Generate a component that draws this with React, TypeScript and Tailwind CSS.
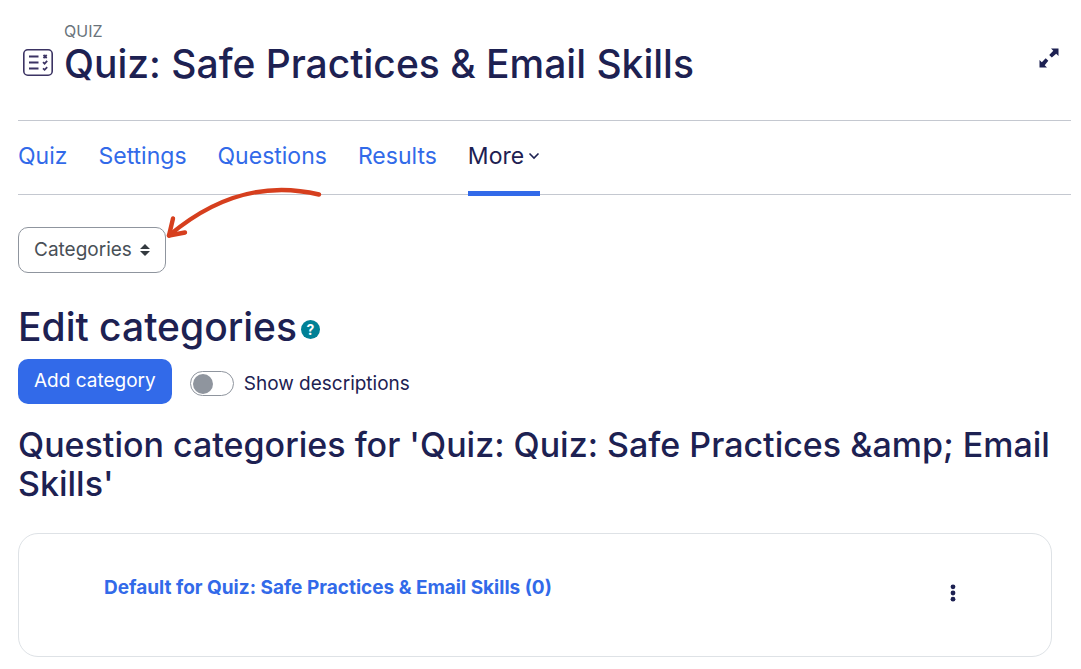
import { useState } from 'react';

const TABS = ['Quiz', 'Settings', 'Questions', 'Results'];

function QuizIcon() {
  return (
    <svg viewBox="0 0 30 27" className="w-[30px] h-[27px] shrink-0" fill="none" stroke="#3b3363" aria-hidden="true">
      <rect x="0.8" y="0.8" width="28.4" height="25.4" rx="4" strokeWidth="1.6" />
      <path d="M6 7.5h9.5M6 13.5h9.5M6 19.5h9.5" strokeWidth="1.8" />
      <path d="M20.5 6l3.2 3.2M23.7 6l-3.2 3.2" strokeWidth="1.8" />
      <path d="M20 13.2l1.6 1.5 2.6-2.8M20 19.4l1.6 1.5 2.6-2.8" strokeWidth="1.7" />
    </svg>
  );
}

function ExpandIcon() {
  return (
    <svg viewBox="0 0 20 20" className="w-5 h-5" fill="#1d2152" aria-hidden="true">
      <path d="M12 0.5h7.5v7.5l-2.3-2.3-4.4 3.8-2.6-2.6 4.1-4.1z" />
      <path d="M8 19.5H0.5V12l2.3 2.3 3.9-4.1 2.6 2.6-3.6 4.4z" />
    </svg>
  );
}

function PointerArrow() {
  return (
    <svg
      viewBox="0 0 160 56"
      className="pointer-events-none absolute left-[146px] -top-11 w-40 h-14"
      fill="none"
      stroke="#d63f1e"
      strokeWidth="4.4"
      strokeLinecap="round"
      strokeLinejoin="round"
      aria-hidden="true"
    >
      <path d="M155 11.5C101 -1.5 50 14.5 5 52.5" />
      <path d="M9 35.5L5 52.5L21 49.5" />
    </svg>
  );
}

export default function App() {
  const [showDescriptions, setShowDescriptions] = useState(false);

  return (
    <div className="bg-white pl-[18px] pr-[10px] pt-[21px] pb-3 font-['Inter',sans-serif] text-[#1d2152]">
      <header className="flex items-center gap-[11px] pl-[5px] pr-3 pb-[33px]">
        <div className="pt-4">
          <QuizIcon />
        </div>
        <div className="flex-1">
          <p className="text-base leading-5 text-[#6a737b]">QUIZ</p>
          <h1 className="text-[39px] leading-[46px] font-medium">Quiz: Safe Practices &amp; Email Skills</h1>
        </div>
        <button aria-label="Full screen" className="pt-2">
          <ExpandIcon />
        </button>
      </header>

      <nav className="flex gap-[31px] border-y border-[#c4c8d0] text-[23px] leading-7">
        {TABS.map((tab) => (
          <a key={tab} href="#" className="pt-[21px] pb-6 text-[#326ae9]">
            {tab}
          </a>
        ))}
        <button className="-mb-0.5 flex items-center gap-1 border-b-5 border-[#326ae9] pt-[21px] pb-[21px]">
          More
          <svg viewBox="0 0 12 8" className="w-3 h-2" fill="none" stroke="currentColor" strokeWidth="1.6" aria-hidden="true">
            <path d="M1.5 1.5L6 6l4.5-4.5" />
          </svg>
        </button>
      </nav>

      <main className="pt-8 pr-[19px]">
        <div className="relative w-fit">
          <select
            aria-label="Question bank section"
            className="h-[46px] w-37 appearance-none rounded-[10px] border border-[#8f959e] bg-white px-[15px] text-[19px] text-[#495057]"
          >
            <option>Categories</option>
          </select>
          <svg viewBox="0 0 10 12" className="pointer-events-none absolute right-4 top-[17px] w-[10px] h-3" fill="#343a40" aria-hidden="true">
            <path d="M5 0l5 5H0zM5 12l5-5H0z" />
          </svg>
          <PointerArrow />
        </div>

        <div className="mt-[30px] flex items-center gap-1">
          <h2 className="text-[39px] leading-[48px] font-medium">Edit categories</h2>
          <button aria-label="Help with Edit categories" className="mt-1 h-[19px] w-[19px] rounded-full bg-[#008196] text-sm leading-[19px] font-bold text-white">
            ?
          </button>
        </div>

        <div className="mt-2 flex items-center gap-[18px]">
          <button className="h-[45px] rounded-[10px] bg-[#326ae9] px-4 text-[19px] text-white">Add category</button>
          <label className="flex items-center gap-[10px] pt-1 text-[19px] leading-6">
            <input
              type="checkbox"
              role="switch"
              checked={showDescriptions}
              onChange={(e) => setShowDescriptions(e.target.checked)}
              className="flex h-[25px] w-11 appearance-none items-center rounded-full border border-[#8f959e] px-0.5 before:h-5 before:w-5 before:rounded-full before:bg-[#8f959e] checked:justify-end"
            />
            Show descriptions
          </label>
        </div>

        <h3 className="mt-[21px] text-[34px] leading-[39px] font-medium">
          Question categories for 'Quiz: Quiz: Safe Practices &amp;amp; Email Skills'
        </h3>

        <section className="mt-[30px] flex items-start justify-between rounded-[20px] border border-[#dee2e6] pt-[42px] pb-[54px] pl-[85px] pr-[93px]">
          <a href="#" className="text-[19px] leading-6 font-bold text-[#326ae9]">
            Default for Quiz: Safe Practices &amp; Email Skills (0)
          </a>
          <button aria-label="Category actions" className="pt-2">
            <svg viewBox="0 0 10 18" className="w-[10px] h-[18px]" fill="#1d2152" aria-hidden="true">
              <circle cx="5" cy="2.8" r="2.4" />
              <circle cx="5" cy="9" r="2.4" />
              <circle cx="5" cy="15.2" r="2.4" />
            </svg>
          </button>
        </section>
      </main>
    </div>
  );
}
